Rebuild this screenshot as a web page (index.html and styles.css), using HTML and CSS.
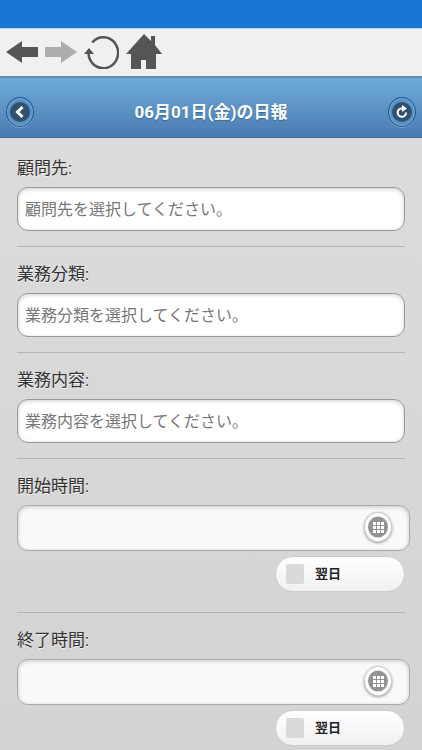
FILE: index.html
```
<!DOCTYPE html>
<html lang="ja">

<head>
   <meta charset="UTF-8">
   <meta name="viewport" content="width=device-width, initial-scale=1.0">
   <link rel="stylesheet" href="styles.css">
   <title>日報</title>
</head>

<body>
   <div class="status-bar"></div>

   <nav class="toolbar">
      <button type="button" aria-label="戻る">
         <svg width="32" height="22" viewBox="0 0 32 22"><path d="M0 11L16 0V6H32V16H16V22Z"/></svg>
      </button>
      <button type="button" aria-label="進む" disabled>
         <svg width="32" height="22" viewBox="0 0 32 22"><path d="M32 11L16 0V6H0V16H16V22Z"/></svg>
      </button>
      <button type="button" aria-label="更新">
         <svg width="35" height="34" viewBox="0 0 35 34">
            <path class="line" d="M8.200 7.500A14.800 15.500 0 1 1 4.500 18"/>
            <path d="M0 19L5 13L10 19Z"/>
         </svg>
      </button>
      <button type="button" aria-label="ホーム">
         <svg width="36" height="35" viewBox="0 0 36 35"><path d="M18 0L25 7V2H29V11L36 20H30V35H20V26H15V35H5V20H0Z"/></svg>
      </button>
   </nav>

   <header class="header">
      <button type="button" class="round-btn" aria-label="前へ">
         <svg width="20" height="20" viewBox="0 0 20 20"><path d="M12.500 5L7.500 10L12.500 15"/></svg>
      </button>
      <h1>06月01日(金)の日報</h1>
      <button type="button" class="round-btn" aria-label="再読み込み">
         <svg width="20" height="20" viewBox="0 0 20 20">
            <path class="thin" d="M14 10.500A4.200 4.200 0 1 1 10.500 6.500"/>
            <path class="tip" d="M10 3L15 6.500L10 10Z"/>
         </svg>
      </button>
   </header>

   <main>
      <form class="report">
         <div class="field">
            <label for="client">顧問先:</label>
            <input class="text-box" type="text" id="client" placeholder="顧問先を選択してください。">
         </div>

         <div class="field">
            <label for="category">業務分類:</label>
            <input class="text-box" type="text" id="category" placeholder="業務分類を選択してください。">
         </div>

         <div class="field">
            <label for="content">業務内容:</label>
            <input class="text-box" type="text" id="content" placeholder="業務内容を選択してください。">
         </div>

         <div class="field time-field">
            <label for="start">開始時間:</label>
            <div class="time-box">
               <input type="text" id="start">
               <button type="button" class="grid-btn" aria-label="開始時間を選択">
                  <svg width="20" height="22" viewBox="0 0 20 22">
                     <ellipse cx="10" cy="11" rx="10" ry="10.500"/>
                     <path d="M5 6h3v3h-3zM9 6h3v3h-3zM13 6h3v3h-3zM5 10h3v3h-3zM9 10h3v3h-3zM13 10h3v3h-3zM5 14h3v3h-3zM9 14h3v3h-3zM13 14h3v3h-3z"/>
                  </svg>
               </button>
            </div>
            <label class="next-day" for="start-next"><input type="checkbox" id="start-next">翌日</label>
         </div>

         <div class="field time-field">
            <label for="end">終了時間:</label>
            <div class="time-box">
               <input type="text" id="end">
               <button type="button" class="grid-btn" aria-label="終了時間を選択">
                  <svg width="20" height="22" viewBox="0 0 20 22">
                     <ellipse cx="10" cy="11" rx="10" ry="10.500"/>
                     <path d="M5 6h3v3h-3zM9 6h3v3h-3zM13 6h3v3h-3zM5 10h3v3h-3zM9 10h3v3h-3zM13 10h3v3h-3zM5 14h3v3h-3zM9 14h3v3h-3zM13 14h3v3h-3z"/>
                  </svg>
               </button>
            </div>
            <label class="next-day" for="end-next"><input type="checkbox" id="end-next">翌日</label>
         </div>
      </form>
   </main>
</body>

</html>
```
FILE: styles.css
```
* {
   padding: 0;
   margin: 0;
   box-sizing: border-box;
}

body {
   min-height: 100vh;
   font-family: Roboto, "Noto Sans CJK JP", sans-serif;
   font-size: 17px;
   color: #333;
   background: linear-gradient(#dedede, #d3d3d3);
}

button,
input {
   font: inherit;
   border: none;
   background: none;
}

button {
   cursor: pointer;
}

svg {
   display: block;
}

.status-bar {
   height: 28px;
   background-color: #1976d3;
}

.toolbar {
   display: flex;
   align-items: center;
   gap: 7px;
   height: 48px;
   padding: 0 6px 2px;
   background-color: #f0f0f0;
   border-top: 1px solid #b9d6f0;
}

.toolbar svg {
   fill: #555;
}

.toolbar button:disabled svg {
   fill: #acacac;
}

.toolbar .line {
   fill: none;
   stroke: #555;
   stroke-width: 2.5;
}

/* blue title bar */
.header {
   display: flex;
   align-items: center;
   justify-content: space-between;
   height: 62px;
   padding: 9px 6px 0;
   background: linear-gradient(#6eacd9, #4a7bb2);
   border-top: 2px solid #648cab;
   border-bottom: 1px solid #456f9a;
}

.header h1 {
   font-size: 17px;
   line-height: 24px;
   color: #fff;
   text-shadow: 0 1px 1px #3e6790;
}

.round-btn {
   display: flex;
   align-items: center;
   justify-content: center;
   width: 28px;
   height: 30px;
   border: 1px solid #1d568c;
   border-radius: 50%;
   background-color: #5b92c4;
   box-shadow: inset 0 0 0 1px #78a8d2, 0 1px 0 #79a4cd;
}

.round-btn svg {
   border-radius: 50%;
   background-color: #31506f;
   fill: none;
   stroke: #fff;
   stroke-width: 3;
}

.round-btn .thin {
   stroke-width: 2;
}

.round-btn .tip {
   fill: #fff;
   stroke: none;
}

.report {
   padding: 3px 17px 0;
}

.field {
   display: flex;
   flex-direction: column;
   padding: 15px 0;
   border-bottom: 1px solid #b5b5b5;
   text-shadow: 0 1px 0 #f3f3f3;
}

.field > label {
   line-height: 24px;
}

.text-box,
.time-box {
   margin-top: 7px;
   border: 1px solid #999;
   border-radius: 11px;
   box-shadow: inset 0 1px 4px rgba(0, 0, 0, 0.2);
}

.text-box {
   width: 100%;
   height: 44px;
   padding: 0 7px;
   background-color: #fff;
   font-size: 16px;
}

.text-box::placeholder {
   color: #777;
}

.time-field {
   padding-bottom: 20px;
}

.time-box {
   display: flex;
   align-items: center;
   height: 46px;
   margin-right: -5px;
   padding: 0 17px 2px 7px;
   background-color: #f9f9f9;
   border-color: #aaa;
}

.time-box input {
   flex: 1;
   min-width: 0;
   height: 100%;
}

.grid-btn {
   display: flex;
   align-items: center;
   justify-content: center;
   width: 28px;
   height: 30px;
   border: 1px solid #ccc;
   border-radius: 50%;
   background-color: #fff;
   box-shadow: 0 1px 3px rgba(0, 0, 0, 0.4);
}

.grid-btn ellipse {
   fill: #939393;
}

.grid-btn path {
   fill: #fff;
}

.field > .next-day {
   display: flex;
   align-items: center;
   align-self: flex-end;
   gap: 11px;
   width: 130px;
   height: 36px;
   margin-top: 5px;
   padding-left: 10px;
   border: 1px solid #ccc;
   border-radius: 18px;
   background: linear-gradient(#fff, #f1f1f1);
   font-size: 13px;
   font-weight: bold;
   color: #222;
   cursor: pointer;
}

.next-day input {
   appearance: none;
   width: 18px;
   height: 20px;
   border-radius: 2px;
   background-color: #dadada;
}

.next-day input:checked {
   background-color: #4a7bb2;
}
```
